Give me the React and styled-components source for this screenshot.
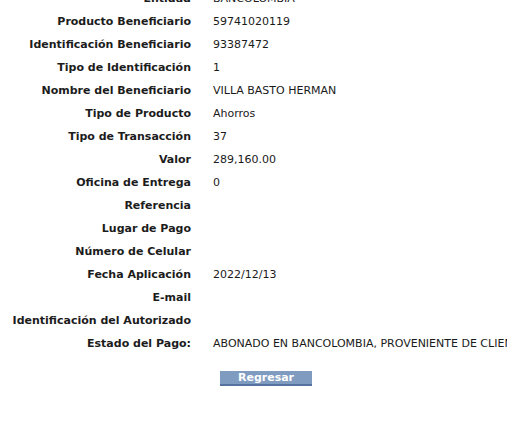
import React from 'react';
import styled, { createGlobalStyle } from 'styled-components';

const GlobalStyle = createGlobalStyle`
    html, body {
        margin: 0;
        padding: 0;
        background: #ffffff;
        overflow: hidden;
    }
    body {
        font-family: Verdana, "DejaVu Sans", sans-serif;
        font-size: 11px;
        color: #000000;
    }
`;

const Page = styled.div`
    width: 507px;
    height: 430px;
    overflow: hidden;
`;

const DetailTable = styled.div`
    display: grid;
    grid-template-columns: 191px max-content;
    column-gap: 22px;
    margin-top: -13px;
`;

const Label = styled.div`
    height: 23px;
    line-height: 23px;
    text-align: right;
    font-weight: bold;
    color: #1c1c1c;
    white-space: nowrap;
`;

const Value = styled.div`
    height: 23px;
    line-height: 23px;
    color: #1a1a1a;
    white-space: nowrap;
`;

const Actions = styled.div`
    display: flex;
    padding-top: 16px;
    padding-left: 220px;
`;

const Button = styled.button`
    width: 92px;
    height: 15px;
    padding: 0;
    border: none;
    border-bottom: 2px solid #5673a0;
    background-color: #7f9bc0;
    color: #ffffff;
    font-family: Verdana, "DejaVu Sans", sans-serif;
    font-size: 11px;
    font-weight: bold;
    line-height: 13px;
    cursor: pointer;
`;

const rows = [
    ['Entidad', 'BANCOLOMBIA'],
    ['Producto Beneficiario', '59741020119'],
    ['Identificación Beneficiario', '93387472'],
    ['Tipo de Identificación', '1'],
    ['Nombre del Beneficiario', 'VILLA BASTO HERMAN'],
    ['Tipo de Producto', 'Ahorros'],
    ['Tipo de Transacción', '37'],
    ['Valor', '289,160.00'],
    ['Oficina de Entrega', '0'],
    ['Referencia', ''],
    ['Lugar de Pago', ''],
    ['Número de Celular', ''],
    ['Fecha Aplicación', '2022/12/13'],
    ['E-mail', ''],
    ['Identificación del Autorizado', ''],
    ['Estado del Pago:', 'ABONADO EN BANCOLOMBIA, PROVENIENTE DE CLIENTE'],
];

const App = () => {
    return (
        <Page>
            <GlobalStyle />
            <DetailTable>
                {rows.map(([label, value]) => (
                    <React.Fragment key={label}>
                        <Label>{label}</Label>
                        <Value>{value}</Value>
                    </React.Fragment>
                ))}
            </DetailTable>
            <Actions>
                <Button>Regresar</Button>
            </Actions>
        </Page>
    );
};

export default App;
